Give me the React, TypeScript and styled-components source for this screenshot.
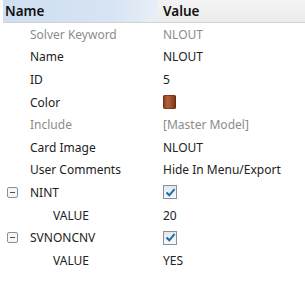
import React from 'react';
import styled, { createGlobalStyle } from 'styled-components';

const GlobalStyle = createGlobalStyle`
    html, body {
        margin: 0;
        padding: 0;
        background: #ffffff;
    }
`;

const Grid = styled.div`
    width: 305px;
    height: 282px;
    overflow: hidden;
    font-family: 'Segoe UI', 'Noto Sans', sans-serif;
    font-size: 12px;
    color: #222;
    display: grid;
    grid-template-columns: 158px 1fr;
    grid-auto-rows: 22.6px;
    grid-template-rows: 23px;
    background: #ffffff;
`;

const HeaderCell = styled.div<{ $active?: boolean }>`
    display: flex;
    align-items: center;
    padding-left: ${(p) => (p.$active ? '2px' : '5px')};
    margin-left: ${(p) => (p.$active ? '3px' : '0')};
    font-weight: 600;
    font-size: 13.5px;
    color: #111;
    border-bottom: 1px solid #d2d2d2;
    background: ${(p) =>
        p.$active
            ? 'linear-gradient(to right, #cfdff1 0%, #d6e4f3 70%, #e9eff7 100%)'
            : 'linear-gradient(to bottom, #f3f3f3, #ececec)'};
`;

const NameCell = styled.div<{ $indent: number; $muted?: boolean }>`
    display: flex;
    align-items: center;
    padding-left: ${(p) => p.$indent}px;
    color: ${(p) => (p.$muted ? '#8c8c8c' : '#222')};
    white-space: nowrap;
`;

const ValueCell = styled.div<{ $muted?: boolean }>`
    display: flex;
    align-items: center;
    padding-left: 5px;
    color: ${(p) => (p.$muted ? '#8c8c8c' : '#222')};
    white-space: nowrap;
`;

const Toggle = styled.span`
    width: 9px;
    height: 9px;
    border: 1px solid #8a8f98;
    border-radius: 2px;
    margin-right: 12px;
    margin-left: 7px;
    position: relative;
    background: #f6f6f6;

    &::after {
        content: '';
        position: absolute;
        left: 2px;
        right: 2px;
        top: 4px;
        height: 1px;
        background: #4a4f58;
    }
`;

const Swatch = styled.span`
    width: 13px;
    height: 14px;
    border-radius: 2px;
    background: linear-gradient(
        to right,
        #8a3b1c 0%,
        #b0603c 35%,
        #a0512f 60%,
        #7a2f14 100%
    );
    box-shadow: inset 0 0 0 1px rgba(90, 30, 10, 0.5);
`;

const Check = styled.span`
    width: 14px;
    height: 14px;
    box-sizing: border-box;
    border: 1px solid #8e8f91;
    background: linear-gradient(to bottom, #e2e8ee, #f8f9fa);
    display: flex;
    align-items: center;
    justify-content: center;
`;

type Row = {
    name: string;
    value?: string;
    muted?: boolean;
    kind?: 'text' | 'color' | 'check';
    group?: boolean;
    child?: boolean;
};

const rows: Row[] = [
    { name: 'Solver Keyword', value: 'NLOUT', muted: true },
    { name: 'Name', value: 'NLOUT' },
    { name: 'ID', value: '5' },
    { name: 'Color', kind: 'color' },
    { name: 'Include', value: '[Master Model]', muted: true },
    { name: 'Card Image', value: 'NLOUT' },
    { name: 'User Comments', value: 'Hide In Menu/Export' },
    { name: 'NINT', kind: 'check', group: true },
    { name: 'VALUE', value: '20', child: true },
    { name: 'SVNONCNV', kind: 'check', group: true },
    { name: 'VALUE', value: 'YES', child: true },
];

function CheckMark(): React.ReactElement {
    return (
        <svg width="11" height="11" viewBox="0 0 11 11">
            <path
                d="M1.5 5.5 L4.3 8.3 L9.5 2.2"
                fill="none"
                stroke="#1a6ea6"
                strokeWidth="2"
            />
        </svg>
    );
}

function App(): React.ReactElement {
    return (
        <>
            <GlobalStyle />
            <Grid>
                <HeaderCell $active>Name</HeaderCell>
                <HeaderCell>Value</HeaderCell>
                {rows.map((row, i) => (
                    <React.Fragment key={i}>
                        <NameCell
                            $indent={row.group ? 0 : row.child ? 53 : 30}
                            $muted={row.muted}
                        >
                            {row.group && <Toggle />}
                            {row.name}
                        </NameCell>
                        <ValueCell $muted={row.muted}>
                            {row.kind === 'color' && <Swatch />}
                            {row.kind === 'check' && (
                                <Check>
                                    <CheckMark />
                                </Check>
                            )}
                            {(!row.kind || row.kind === 'text') && row.value}
                        </ValueCell>
                    </React.Fragment>
                ))}
            </Grid>
        </>
    );
}

export default App;
